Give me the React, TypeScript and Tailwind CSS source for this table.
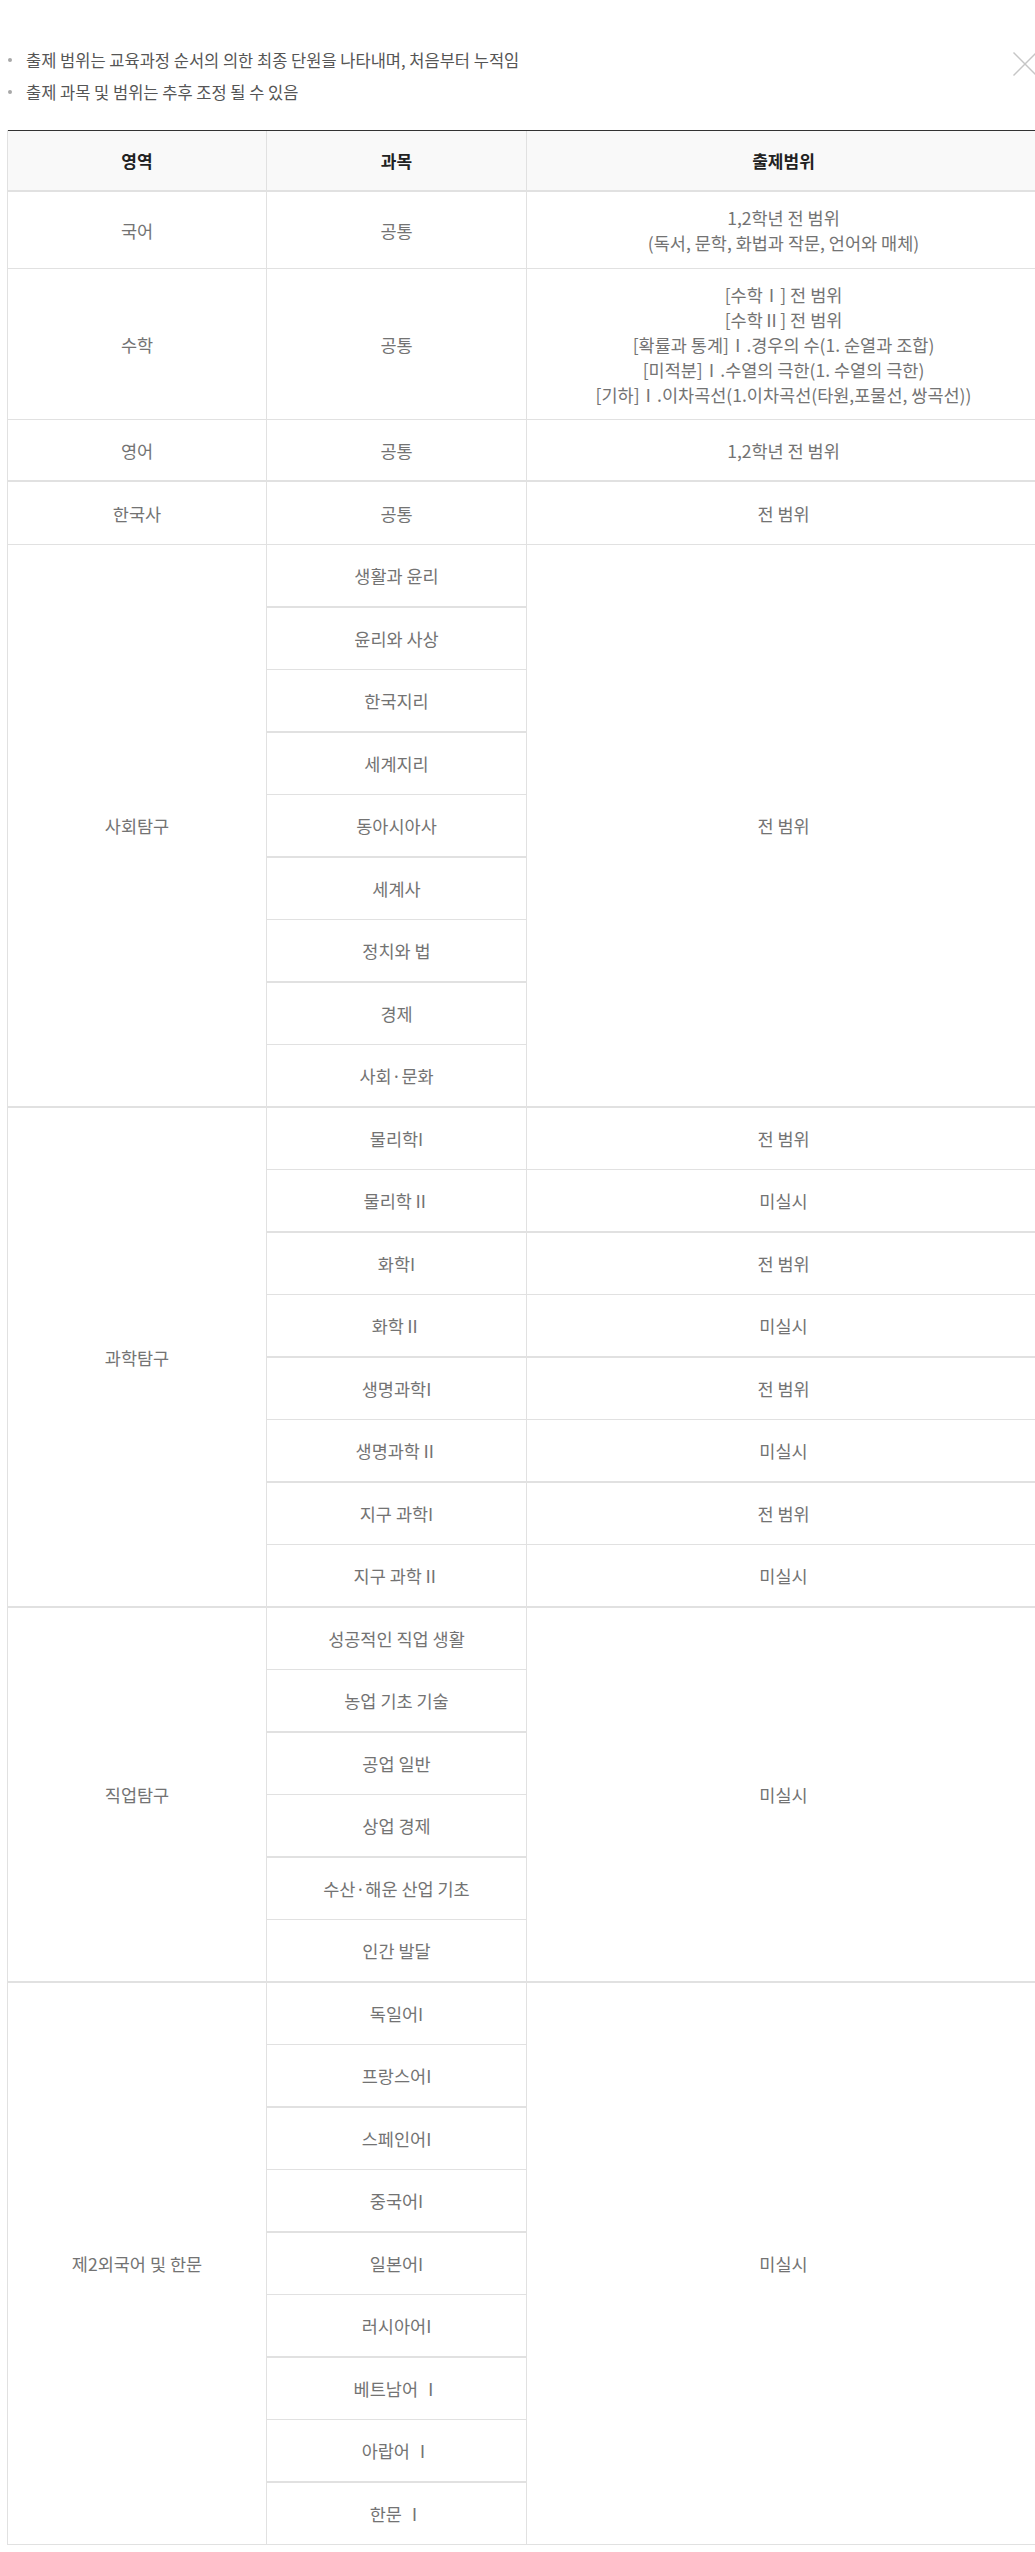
import React from "react";

const FONT = { fontFamily: '"Noto Sans CJK KR", "Noto Sans", sans-serif' };

type Kind = "thin" | "thick" | "last";
const rowCls: Record<Kind, string> = {
  thin: "h-[62px] border-b border-[#e1e1e1]",
  thick: "h-[63px] border-b-2 border-[#e1e1e1]",
  last: "h-[61px]",
};

function Cell({ children, className = "" }: { children?: React.ReactNode; className?: string }) {
  return (
    <div className={"flex items-center justify-center text-center text-[17.5px] leading-[25px] text-[#737373] " + className}>
      {children}
    </div>
  );
}

function kinds(n: number, startThick: boolean): Kind[] {
  const out: Kind[] = [];
  for (let i = 0; i < n; i++) {
    if (i === n - 1) out.push("last");
    else out.push((i % 2 === 0) === startThick ? "thick" : "thin");
  }
  return out;
}

function SpanGroup({
  area,
  subjects,
  range,
  startThick,
  groupThick,
}: {
  area: string;
  subjects: string[];
  range: string;
  startThick: boolean;
  groupThick: boolean;
}) {
  const k = kinds(subjects.length, startThick);
  return (
    <div className={"flex " + (groupThick ? "border-b-2 border-[#e1e1e1]" : "border-b border-[#e1e1e1]")}>
      <Cell className="w-[259px] shrink-0 border-r border-[#e1e1e1]">{area}</Cell>
      <div className="w-[260px] shrink-0 flex flex-col border-r border-[#e1e1e1]">
        {subjects.map((s, i) => (
          <Cell key={i} className={rowCls[k[i]]}>
            {s}
          </Cell>
        ))}
      </div>
      <Cell className="flex-1">{range}</Cell>
    </div>
  );
}

function PairGroup({
  area,
  rows,
  startThick,
  groupThick,
}: {
  area: string;
  rows: [string, string][];
  startThick: boolean;
  groupThick: boolean;
}) {
  const k = kinds(rows.length, startThick);
  return (
    <div className={"flex " + (groupThick ? "border-b-2 border-[#e1e1e1]" : "border-b border-[#e1e1e1]")}>
      <Cell className="w-[259px] shrink-0 border-r border-[#e1e1e1]">{area}</Cell>
      <div className="flex-1 flex flex-col">
        {rows.map(([s, r], i) => (
          <div key={i} className={"flex " + rowCls[k[i]]}>
            <Cell className="w-[260px] shrink-0 border-r border-[#e1e1e1]">{s}</Cell>
            <Cell className="flex-1">{r}</Cell>
          </div>
        ))}
      </div>
    </div>
  );
}

function Simple({
  area,
  subject,
  children,
  cls,
}: {
  area: string;
  subject: string;
  children: React.ReactNode;
  cls: string;
}) {
  return (
    <div className={"flex " + cls}>
      <Cell className="w-[259px] shrink-0 border-r border-[#e1e1e1]">{area}</Cell>
      <Cell className="w-[260px] shrink-0 border-r border-[#e1e1e1]">{subject}</Cell>
      <Cell className="flex-1">{children}</Cell>
    </div>
  );
}

export default function App() {
  return (
    <div className="relative w-[1035px] min-h-[2552px] overflow-hidden bg-white" style={FONT}>
      <svg className="absolute left-[1013px] top-[52px]" width="24" height="24" viewBox="0 0 24 24">
        <line x1="0.5" y1="0.5" x2="23.5" y2="23.5" stroke="#c6c6c6" strokeWidth="1.4" />
        <line x1="23.5" y1="0.5" x2="0.5" y2="23.5" stroke="#c6c6c6" strokeWidth="1.4" />
      </svg>

      <ul className="pt-[44px]">
        {["출제 범위는 교육과정 순서의 의한 최종 단원을 나타내며, 처음부터 누적임", "출제 과목 및 범위는 추후 조정 될 수 있음"].map(
          (t, i) => (
            <li key={i} className="flex items-center h-[32px] text-[16.5px] text-[#555]">
              <span className="ml-[8px] mr-[14px] w-[4px] h-[4px] rounded-full bg-[#a8a8a8] shrink-0" />
              <span>{t}</span>
            </li>
          )
        )}
      </ul>

      <div className="mt-[22px] ml-[7px] w-[1034px] border-l border-r border-[#e1e1e1]">
        <div className="flex h-[62px] border-t border-t-[#333333] border-b-2 border-b-[#e1e1e1] bg-[#f9f9f9] text-[17px] font-bold text-[#222]">
          <div className="w-[259px] shrink-0 border-r border-[#e1e1e1] flex items-center justify-center">영역</div>
          <div className="w-[260px] shrink-0 border-r border-[#e1e1e1] flex items-center justify-center">과목</div>
          <div className="flex-1 flex items-center justify-center">출제범위</div>
        </div>

        <Simple area="국어" subject="공통" cls="h-[77px] border-b border-[#e1e1e1]">
          <div>
            1,2학년 전 범위
            <br />
            (독서, 문학, 화법과 작문, 언어와 매체)
          </div>
        </Simple>
        <Simple area="수학" subject="공통" cls="h-[151px] border-b border-[#e1e1e1]">
          <div>
            [수학Ⅰ] 전 범위
            <br />
            [수학Ⅱ] 전 범위
            <br />
            [확률과 통계]Ⅰ.경우의 수(1. 순열과 조합)
            <br />
            [미적분]Ⅰ.수열의 극한(1. 수열의 극한)
            <br />
            [기하]Ⅰ.이차곡선(1.이차곡선(타원,포물선, 쌍곡선))
          </div>
        </Simple>
        <Simple area="영어" subject="공통" cls="h-[62px] border-b-2 border-[#e1e1e1]">
          1,2학년 전 범위
        </Simple>
        <Simple area="한국사" subject="공통" cls="h-[63px] border-b border-[#e1e1e1]">
          전 범위
        </Simple>

        <SpanGroup
          area="사회탐구"
          subjects={["생활과 윤리", "윤리와 사상", "한국지리", "세계지리", "동아시아사", "세계사", "정치와 법", "경제", "사회·문화"]}
          range="전 범위"
          startThick={true}
          groupThick={true}
        />

        <PairGroup
          area="과학탐구"
          rows={[
            ["물리학I", "전 범위"],
            ["물리학Ⅱ", "미실시"],
            ["화학I", "전 범위"],
            ["화학Ⅱ", "미실시"],
            ["생명과학I", "전 범위"],
            ["생명과학Ⅱ", "미실시"],
            ["지구 과학I", "전 범위"],
            ["지구 과학Ⅱ", "미실시"],
          ]}
          startThick={false}
          groupThick={true}
        />

        <SpanGroup
          area="직업탐구"
          subjects={["성공적인 직업 생활", "농업 기초 기술", "공업 일반", "상업 경제", "수산·해운 산업 기초", "인간 발달"]}
          range="미실시"
          startThick={false}
          groupThick={true}
        />

        <SpanGroup
          area="제2외국어 및 한문"
          subjects={["독일어I", "프랑스어I", "스페인어I", "중국어I", "일본어I", "러시아어I", "베트남어 Ⅰ", "아랍어 Ⅰ", "한문 Ⅰ"]}
          range="미실시"
          startThick={false}
          groupThick={false}
        />
      </div>
    </div>
  );
}
